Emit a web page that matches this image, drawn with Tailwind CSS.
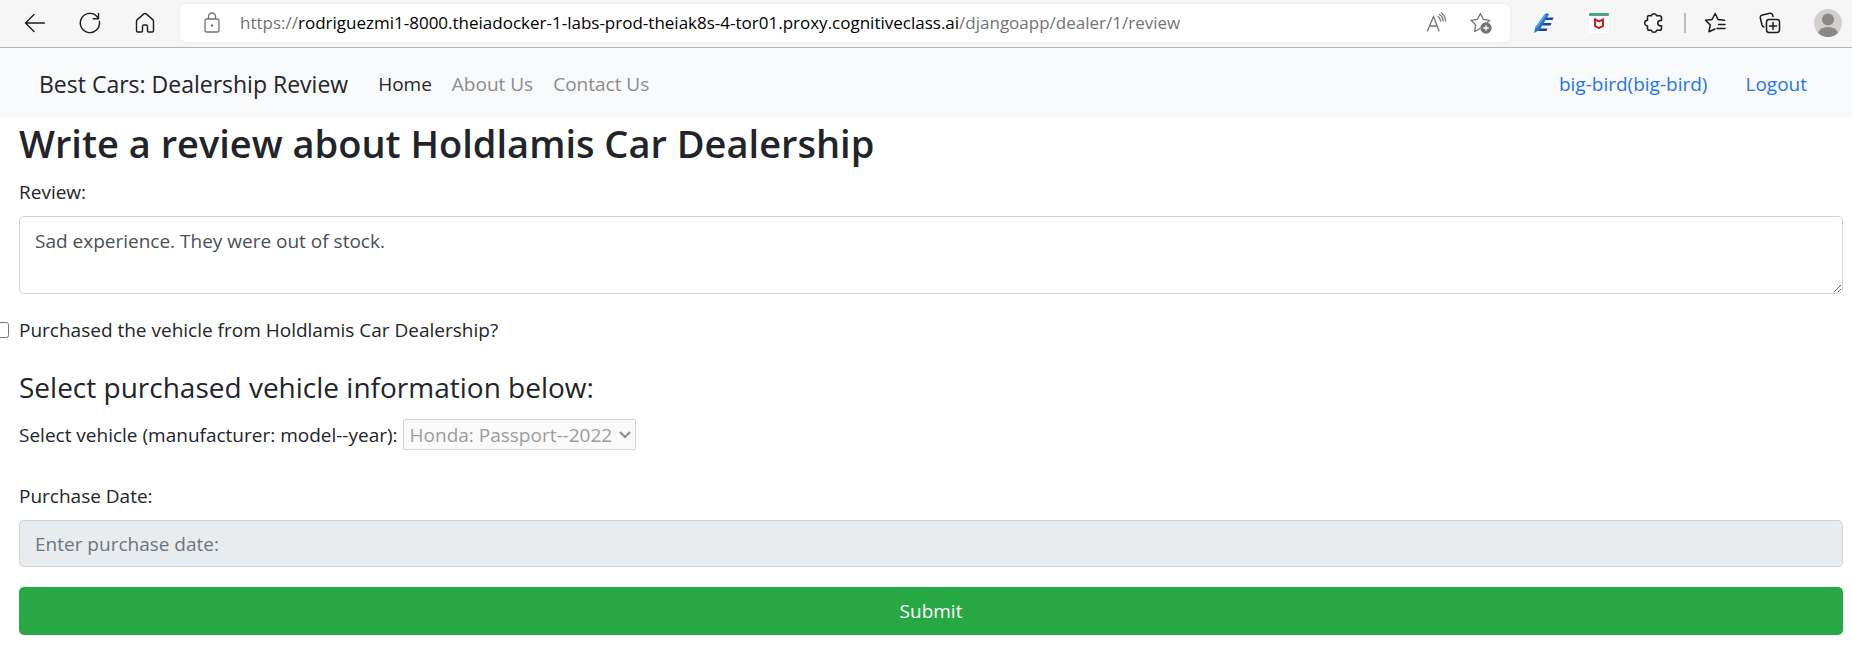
<!DOCTYPE html>
<html lang="en">
<head>
<meta charset="utf-8">
<title>Best Cars: Dealership Review</title>
<script src="https://cdn.jsdelivr.net/npm/@tailwindcss/browser@4"></script>
</head>
<body class="bg-white font-['Open_Sans','Noto_Sans',sans-serif] text-[19px] leading-[30px] text-[#212529]">
<header class="flex h-12 items-center border-b border-[#b4b4b4] bg-[#f6f6f6] pr-[10px] pb-px pl-6">
  <div class="flex items-center gap-[33px] text-[#1b1b1b]">
    <button type="button" aria-label="Back" class="block"><svg class="block h-[22px] w-[22px]" viewBox="0 0 22 22" fill="none" stroke="currentColor" stroke-width="1.4" stroke-linecap="round" stroke-linejoin="round"><path d="M20.500 11H2M10 2.500L1.500 11l8.500 8.500"/></svg></button>
    <button type="button" aria-label="Refresh" class="block"><svg class="block h-[22px] w-[22px]" viewBox="0 0 22 22" fill="none" stroke="currentColor" stroke-width="1.4" stroke-linecap="round" stroke-linejoin="round"><path d="M20.400 9.500A9.600 9.600 0 1 1 18.800 5.500M19.500 1.500v5.300h-5.300"/></svg></button>
    <button type="button" aria-label="Home page" class="block"><svg class="block h-[22px] w-[22px]" viewBox="0 0 22 22" fill="none" stroke="currentColor" stroke-width="1.4" stroke-linejoin="round"><path d="M2.500 9.300Q2.500 8.300 3.300 7.600L9.800 1.900Q11 1 12.200 1.900L18.700 7.600Q19.500 8.300 19.500 9.300V18.800Q19.500 20 18.300 20H14.500Q13.500 20 13.500 19V14.500Q13.500 13 12 13H10Q8.500 13 8.500 14.500V19Q8.500 20 7.500 20H3.700Q2.500 20 2.500 18.800Z"/></svg></button>
  </div>
  <div class="ml-6 flex h-[38px] min-w-0 flex-1 items-center rounded-md bg-white pr-[18px] pl-6 text-[#737373] shadow-[0_0_3px_#e4e4e4]">
    <svg class="h-[22px] w-4 shrink-0" viewBox="0 0 16 22" fill="none" stroke="currentColor" stroke-width="1.3"><rect x="1" y="7" width="14" height="13" rx="1.500"/><path d="M4.500 7V4.500a3.500 3.500 0 0 1 7 0V7"/><circle cx="8" cy="13.500" r="1.200" fill="currentColor" stroke="none"/></svg>
    <div class="ml-5 min-w-0 flex-1 truncate text-[17px]">https://<span class="text-black">rodriguezmi1-8000.theiadocker-1-labs-prod-theiak8s-4-tor01.proxy.cognitiveclass.ai</span>/djangoapp/dealer/1/review</div>
    <div class="flex items-center gap-[23px]">
      <button type="button" aria-label="Read aloud" class="block"><svg class="block h-[22px] w-[22px]" viewBox="0 0 22 22" fill="none" stroke="currentColor" stroke-width="1.300" stroke-linecap="round"><path d="M2.500 19L8.500 4.500L14 19M4.500 14h7.500M13 4.500q2.500 1.500 2.500 4.500M14.500 2.500q3.500 2 3.500 6.500M16.500 1q4 3 4 8"/></svg></button>
      <button type="button" aria-label="Add to favorites" class="block"><svg class="block h-[22px] w-[22px]" viewBox="0 0 22 22" fill="none" stroke="currentColor" stroke-width="1.300" stroke-linejoin="round"><path d="M10 16.500L4.700 19.500L5.700 12.900L1 8.300L7.500 7.300L10.400 1.500L13.300 7.300L19.800 8.300L17 10.500"/><circle cx="16" cy="16" r="5.700" fill="currentColor" stroke="none"/><path d="M16 13.200v5.600M13.200 16h5.600" stroke="#fff"/></svg></button>
    </div>
  </div>
  <div class="ml-[23px] flex items-center text-[#1b1b1b]">
    <button type="button" aria-label="Editor extension" class="block"><svg class="block h-[22px] w-[22px]" viewBox="0 0 22 22"><path d="M12 5.500h8.500l-1 2.600h-8zM9.500 11h9l-1 2.600H8zM6 16.500h8.500l-1 2.600H5z" fill="#1d4596"/><path d="M1 21L2.500 15L11.500 2.500L14 1L16 2.500L6.500 18Z" fill="#2671cf"/><path d="M2.500 15L11.500 2.500L13 3.500L4 16Z" fill="#55a8ed"/></svg></button>
    <button type="button" aria-label="Web protection" class="ml-[33px] block"><svg class="block h-[22px] w-[22px]" viewBox="0 0 22 22"><path d="M1 3h20v18H1z" fill="#fff"/><rect x="1" y="1" width="20" height="3" rx="1" fill="#4aa387"/><path d="M7 7.500L11 9.500L15 7.500V14L11 16.200L7 14Z" fill="none" stroke="#c01d24" stroke-width="2"/></svg></button>
    <button type="button" aria-label="Extensions" class="ml-[33px] block"><svg class="block h-[22px] w-[22px]" viewBox="0 0 22 22" fill="none" stroke="currentColor" stroke-width="1.500" stroke-linejoin="round"><path d="M5.500 3.800H8.300A2.800 2.800 0 0 1 13.700 3.800H16.500Q18.500 3.800 18.500 5.800V8.500H17A2.700 2.700 0 0 0 17 13.800H18.500V16.500Q18.500 18.300 16.500 18.300H13.700A2.800 2.800 0 0 1 8.300 18.300H6.300Q4.500 18.300 4.500 16.500V13.900A2.800 2.800 0 0 1 4.500 8.300V5Q4.500 3.800 5.500 3.800Z"/></svg></button>
    <span class="ml-[19px] h-5 w-[2px] bg-[#bcbcbc]"></span>
    <button type="button" aria-label="Favorites" class="ml-[18px] block"><svg class="block h-[22px] w-[22px]" viewBox="0 0 22 22" fill="none" stroke="currentColor" stroke-width="1.500" stroke-linejoin="round" stroke-linecap="round"><path d="M20.500 8.300L14 7.500L11.200 1.500L8 7.500L1.500 8.300L6.200 12.900L5 19.700L11 17M14.500 12.500H21M13 16.500h8"/></svg></button>
    <button type="button" aria-label="Collections" class="ml-[33px] block"><svg class="block h-[22px] w-[22px]" viewBox="0 0 22 22" fill="none" stroke="currentColor" stroke-width="1.500" stroke-linejoin="round" stroke-linecap="round"><path d="M4.800 15Q3.500 14.500 3 13L1.200 5.500Q1 3.800 2.700 3.200L10.800 1.300Q12.800 1 13.500 2.700L14 4.500"/><rect x="7.500" y="7.500" width="13" height="13" rx="2.500"/><path d="M14 10.500v7M10.500 14h7"/></svg></button>
    <button type="button" aria-label="Profile" class="ml-[33px] block"><svg class="block h-7 w-7" viewBox="0 0 28 28"><circle cx="14" cy="14" r="14" fill="#d3d0cd"/><circle cx="14" cy="10.500" r="6" fill="#8a8784"/><path d="M4 24Q6 18 14 18T24 24Q19.500 28 14 28T4 24Z" fill="#8a8784"/></svg></button>
  </div>
</header>

<nav class="flex h-[70px] items-center bg-[#f8f9fa] pt-[2px] pr-[45px] pl-[39px]">
  <a href="#" class="text-[23px]">Best Cars: Dealership Review</a>
  <div class="ml-[30px] flex gap-5 text-[#8b8c8d]">
    <a href="#" class="text-[#212529]">Home</a>
    <a href="#">About Us</a>
    <a href="#">Contact Us</a>
  </div>
  <div class="ml-auto flex gap-[38px] text-[#1f76e8]">
    <a href="#">big-bird(big-bird)</a>
    <a href="#">Logout</a>
  </div>
</nav>

<main class="pr-[9px] pl-[19px]">
  <h1 class="text-[38px] leading-[50px] font-semibold">Write a review about Holdlamis Car Dealership</h1>
  <form class="pt-[9px]">
    <label for="review" class="block">Review:</label>
    <textarea id="review" class="mt-[9px] block h-[78px] w-full rounded-[5px] border border-[#ced4da] px-[15px] py-[9px] text-[#495057]">Sad experience. They were out of stock.</textarea>
    <div class="mt-[21px] flex items-center">
      <input id="purchased" type="checkbox" class="-ml-[26px] mr-[10px] h-4 w-4">
      <label for="purchased">Purchased the vehicle from Holdlamis Car Dealership?</label>
    </div>
    <h2 class="mt-6 text-[28px] leading-9">Select purchased vehicle information below:</h2>
    <div class="mt-[14px] flex items-center gap-[5px]">
      <label for="vehicle">Select vehicle (manufacturer: model--year):</label>
      <div class="grid items-center">
        <select id="vehicle" disabled class="col-start-1 row-start-1 h-[31px] appearance-none rounded-[2px] border border-[#d4d4d4] bg-[#fafafa] pr-[22px] pl-[6px] text-[#9d9d9d]"><option>Honda: Passport--2022</option></select>
        <svg class="pointer-events-none z-10 col-start-1 row-start-1 mr-[5px] h-3 w-3 justify-self-end" viewBox="0 0 12 12" fill="none" stroke="#8a8a8a" stroke-width="2"><path d="M1 3l5 5l5-5"/></svg>
      </div>
    </div>
    <label for="date" class="mt-[31px] block">Purchase Date:</label>
    <input id="date" type="text" disabled placeholder="Enter purchase date:" class="mt-[9px] block h-[47px] w-full rounded-[5px] border border-[#ced4da] bg-[#e9ecef] px-[15px] placeholder:text-[#6c757d]">
    <button type="submit" class="mt-5 block h-12 w-full rounded-[5px] bg-[#28a745] text-white">Submit</button>
  </form>
</main>
</body>
</html>
